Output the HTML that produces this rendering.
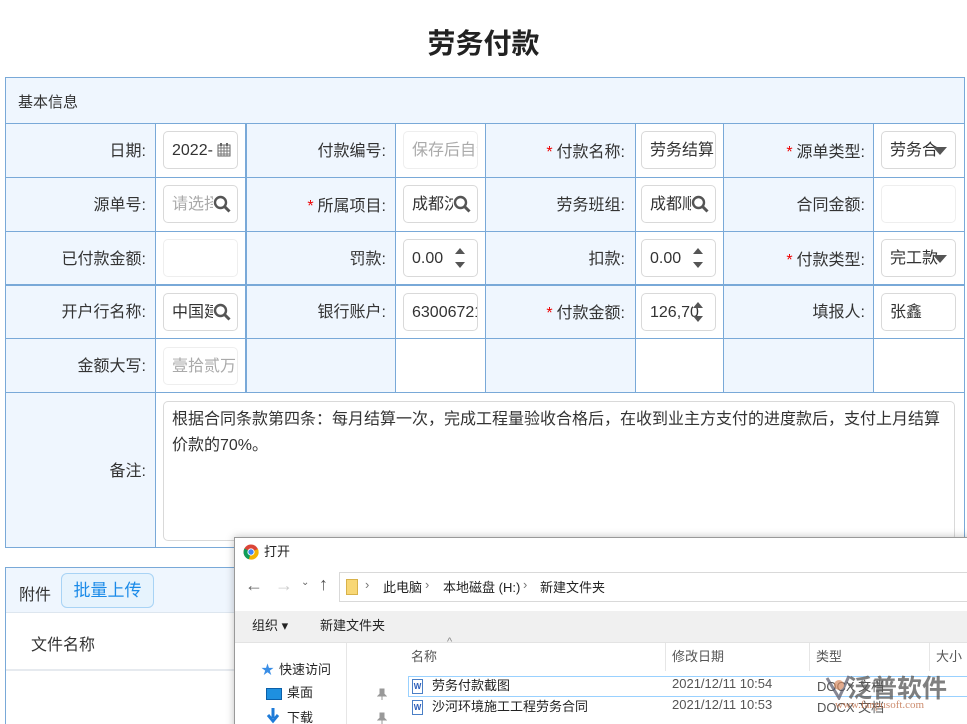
<!DOCTYPE html>
<html><head><meta charset="utf-8"><style>
*{box-sizing:border-box;margin:0;padding:0}
html,body{width:967px;height:724px;overflow:hidden}
body{background:#fff;font-family:"Liberation Sans","Noto Sans CJK SC",sans-serif;color:#333;position:relative}
.a{position:absolute}
.h{position:absolute;height:1px;background:#79a9d8}
.v{position:absolute;width:1px;background:#79a9d8}
.bl{position:absolute;background:#eff6fe}
.lb{position:absolute;font-size:16px;text-align:right;line-height:20px;white-space:nowrap}
.lb i{color:#e00;font-style:normal;margin-right:4px}
.in{position:absolute;height:38px;border:1px solid #d9d9d9;border-radius:5px;background:#fff;font-size:16px;line-height:38px;padding-left:8px;white-space:nowrap;overflow:hidden;color:#333}
.ph{color:#aaa}
.ic{position:absolute;right:6px;top:9px}
.tri{position:absolute;right:8px;top:15px;width:0;height:0;border-left:7px solid transparent;border-right:7px solid transparent;border-top:8px solid #555}
.sp{position:absolute;right:12px;top:8px;width:0;height:0;border-left:5px solid transparent;border-right:5px solid transparent;border-bottom:6px solid #555}
.sp2{position:absolute;right:12px;top:22px;width:0;height:0;border-left:5px solid transparent;border-right:5px solid transparent;border-top:6px solid #555}
.d{font-size:13px;color:#222;position:absolute;white-space:nowrap;margin-top:-3px}
</style></head><body>
<div class="a" style="left:0;top:22px;width:967px;text-align:center;font-size:28px;font-weight:bold;color:#222">劳务付款</div>

<div class="bl" style="left:5px;top:77px;width:960px;height:46px"></div>
<div class="bl" style="left:5px;top:123px;width:150px;height:425px"></div>
<div class="bl" style="left:245px;top:123px;width:150px;height:270px"></div>
<div class="bl" style="left:485px;top:123px;width:150px;height:270px"></div>
<div class="bl" style="left:723px;top:123px;width:150px;height:270px"></div>
<div class="a" style="left:18px;top:91px;font-size:15px">基本信息</div>

<div class="h" style="left:5px;top:77px;width:960px"></div>
<div class="h" style="left:5px;top:123px;width:960px"></div>
<div class="h" style="left:5px;top:177px;width:960px"></div>
<div class="h" style="left:5px;top:231px;width:960px"></div>
<div class="h" style="left:5px;top:284px;width:960px;height:2px"></div>
<div class="h" style="left:5px;top:338px;width:960px"></div>
<div class="h" style="left:5px;top:392px;width:960px"></div>
<div class="h" style="left:5px;top:547px;width:960px"></div>
<div class="v" style="left:5px;top:77px;height:471px"></div>
<div class="v" style="left:964px;top:77px;height:471px"></div>
<div class="v" style="left:155px;top:123px;height:425px"></div>
<div class="v" style="left:245px;top:123px;height:270px;width:2px"></div>
<div class="v" style="left:395px;top:123px;height:270px"></div>
<div class="v" style="left:485px;top:123px;height:270px"></div>
<div class="v" style="left:635px;top:123px;height:270px"></div>
<div class="v" style="left:723px;top:123px;height:270px"></div>
<div class="v" style="left:873px;top:123px;height:270px"></div>

<div class="lb" style="right:821px;top:142px">日期:</div>
<div class="in" style="left:163px;top:131px;width:75px">2022-<svg class="ic" style="top:11px;right:6px" width="14" height="14" viewBox="0 0 14 14"><rect x="1" y="2" width="12" height="11" fill="none" stroke="#666"/><path d="M1 5h12M1 8h12M1 11h12M4 2v11M7 2v11M10 2v11" stroke="#777"/><rect x="3" y="0" width="2" height="3" fill="#666"/><rect x="9" y="0" width="2" height="3" fill="#666"/></svg></div>
<div class="lb" style="right:581px;top:142px">付款编号:</div>
<div class="in ph" style="left:403px;top:131px;width:75px;border-color:#eee">保存后自动</div>
<div class="lb" style="right:342px;top:143px"><i>*</i>付款名称:</div>
<div class="in" style="left:641px;top:131px;width:75px">劳务结算</div>
<div class="lb" style="right:102px;top:143px"><i>*</i>源单类型:</div>
<div class="in" style="left:881px;top:131px;width:75px">劳务合<span class="tri"></span></div>

<div class="lb" style="right:821px;top:196px">源单号:</div>
<div class="in ph" style="left:163px;top:185px;width:75px">请选择<svg class="ic" width="18" height="18" viewBox="0 0 18 18" style="background:#fff"><circle cx="7.5" cy="7.5" r="5.5" fill="none" stroke="#555" stroke-width="2.4"/><path d="M11.5 11.5l5 5" stroke="#555" stroke-width="3"/></svg></div>
<div class="lb" style="right:581px;top:197px"><i>*</i>所属项目:</div>
<div class="in" style="left:403px;top:185px;width:75px">成都沈<svg class="ic" width="18" height="18" viewBox="0 0 18 18" style="background:#fff"><circle cx="7.5" cy="7.5" r="5.5" fill="none" stroke="#555" stroke-width="2.4"/><path d="M11.5 11.5l5 5" stroke="#555" stroke-width="3"/></svg></div>
<div class="lb" style="right:342px;top:196px">劳务班组:</div>
<div class="in" style="left:641px;top:185px;width:75px">成都顺<svg class="ic" width="18" height="18" viewBox="0 0 18 18" style="background:#fff"><circle cx="7.5" cy="7.5" r="5.5" fill="none" stroke="#555" stroke-width="2.4"/><path d="M11.5 11.5l5 5" stroke="#555" stroke-width="3"/></svg></div>
<div class="lb" style="right:102px;top:196px">合同金额:</div>
<div class="in" style="left:881px;top:185px;width:75px;border-color:#eee"></div>

<div class="lb" style="right:821px;top:250px">已付款金额:</div>
<div class="in" style="left:163px;top:239px;width:75px;border-color:#eee"></div>
<div class="lb" style="right:581px;top:250px">罚款:</div>
<div class="in" style="left:403px;top:239px;width:75px">0.00<span class="sp"></span><span class="sp2"></span></div>
<div class="lb" style="right:342px;top:250px">扣款:</div>
<div class="in" style="left:641px;top:239px;width:75px">0.00<span class="sp"></span><span class="sp2"></span></div>
<div class="lb" style="right:102px;top:251px"><i>*</i>付款类型:</div>
<div class="in" style="left:881px;top:239px;width:75px">完工款<span class="tri"></span></div>

<div class="lb" style="right:821px;top:303px">开户行名称:</div>
<div class="in" style="left:163px;top:293px;width:75px">中国建<svg class="ic" width="18" height="18" viewBox="0 0 18 18" style="background:#fff"><circle cx="7.5" cy="7.5" r="5.5" fill="none" stroke="#555" stroke-width="2.4"/><path d="M11.5 11.5l5 5" stroke="#555" stroke-width="3"/></svg></div>
<div class="lb" style="right:581px;top:303px">银行账户:</div>
<div class="in" style="left:403px;top:293px;width:75px">63006721</div>
<div class="lb" style="right:342px;top:304px"><i>*</i>付款金额:</div>
<div class="in" style="left:641px;top:293px;width:75px;padding-right:20px">126,70<span class="sp" style="background:#fff"></span><span class="sp2"></span></div>
<div class="lb" style="right:102px;top:303px">填报人:</div>
<div class="in" style="left:881px;top:293px;width:75px">张鑫</div>

<div class="lb" style="right:821px;top:357px">金额大写:</div>
<div class="in ph" style="left:163px;top:347px;width:75px;border-color:#eee">壹拾贰万</div>

<div class="lb" style="right:821px;top:462px">备注:</div>
<div class="a" style="left:163px;top:401px;width:792px;height:140px;border:1px solid #d9d9d9;border-radius:5px;padding:5px 8px;font-size:16px;line-height:26px">根据合同条款第四条：每月结算一次，完成工程量验收合格后，在收到业主方支付的进度款后，支付上月结算价款的70%。</div>

<div class="a" style="left:5px;top:567px;width:960px;height:160px;border:1px solid #79a9d8"></div>
<div class="bl" style="left:6px;top:568px;width:958px;height:45px;border-bottom:1px solid #dde6ef"></div>
<div class="a" style="left:19px;top:581px;font-size:16px">附件</div>
<div class="a" style="left:61px;top:573px;width:93px;height:35px;border:1px solid #a8d3f5;border-radius:6px;background:#e6f3fd;color:#1a8ae8;font-size:17px;text-align:center;line-height:33px">批量上传</div>
<div class="a" style="left:31px;top:631px;font-size:16px">文件名称</div>
<div class="a" style="left:6px;top:669px;width:958px;height:2px;background:#e6eaef"></div>

<div class="a" style="left:234px;top:537px;width:740px;height:200px;background:#fff;border:1px solid #999;box-shadow:0 0 8px rgba(0,0,0,.25)">
  <svg class="a" style="left:8px;top:6px" width="16" height="16" viewBox="0 0 16 16"><circle cx="8" cy="8" r="7.5" fill="#db4437"/><path d="M8 8L1.5 4.5A7.5 7.5 0 0 0 6 15.3z" fill="#0f9d58"/><path d="M8 8l6.9-3A7.5 7.5 0 0 1 6 15.3z" fill="#f4b400"/><circle cx="8" cy="8" r="3.6" fill="#fff"/><circle cx="8" cy="8" r="2.7" fill="#4285f4"/></svg>
  <div class="d" style="left:29px;top:6px">打开</div>
  <div class="d" style="left:10px;top:40px;font-size:18px;color:#666">←</div>
  <div class="d" style="left:40px;top:40px;font-size:18px;color:#ccc">→</div>
  <div class="d" style="left:66px;top:42px;font-size:10px;color:#666">⌄</div>
  <div class="d" style="left:84px;top:39px;font-size:18px;color:#555">↑</div>
  <div class="a" style="left:104px;top:34px;width:640px;height:30px;border:1px solid #d9d9d9"></div>
  <div class="a" style="left:111px;top:41px;width:12px;height:16px;background:#f8d775;border:1px solid #d8b24a"></div>
  <div class="d" style="left:130px;top:42px;color:#777">›</div>
  <div class="d" style="left:148px;top:42px">此电脑</div>
  <div class="d" style="left:190px;top:42px;color:#777">›</div>
  <div class="d" style="left:208px;top:42px">本地磁盘 (H:)</div>
  <div class="d" style="left:288px;top:42px;color:#777">›</div>
  <div class="d" style="left:305px;top:42px">新建文件夹</div>
  <div class="a" style="left:0;top:73px;width:740px;height:32px;background:#f0f0f0;border-bottom:1px solid #e3e3e3"></div>
  <div class="d" style="left:17px;top:80px">组织 ▾</div>
  <div class="d" style="left:85px;top:80px">新建文件夹</div>
  <div class="a" style="left:111px;top:105px;width:1px;height:100px;background:#e6e6e6"></div>
  <div class="d" style="left:26px;top:124px;color:#3a8ee6">★</div>
  <div class="d" style="left:44px;top:124px">快速访问</div>
  <div class="a" style="left:31px;top:150px;width:16px;height:12px;background:#1e90e0;border:1px solid #0b5fa8"></div>
  <div class="d" style="left:52px;top:147px">桌面</div>
  <svg class="a" style="left:142px;top:150px" width="10" height="12" viewBox="0 0 10 12"><path d="M3 1h4v5l2 2H1l2-2z M5 8v4" fill="#999" stroke="#999"/></svg>
  <svg class="a" style="left:30px;top:170px" width="16" height="16" viewBox="0 0 16 16"><path d="M8 0v10M3 7l5 6 5-6" fill="none" stroke="#1e7bd8" stroke-width="3"/></svg>
  <div class="d" style="left:52px;top:172px">下载</div>
  <svg class="a" style="left:142px;top:174px" width="10" height="12" viewBox="0 0 10 12"><path d="M3 1h4v5l2 2H1l2-2z M5 8v4" fill="#999" stroke="#999"/></svg>
  <div class="d" style="left:212px;top:101px;color:#888;font-size:11px">^</div>
  <div class="d" style="left:176px;top:111px;color:#555">名称</div>
  <div class="a" style="left:430px;top:105px;width:1px;height:28px;background:#e6e6e6"></div>
  <div class="d" style="left:437px;top:111px;color:#555">修改日期</div>
  <div class="a" style="left:574px;top:105px;width:1px;height:28px;background:#e6e6e6"></div>
  <div class="d" style="left:581px;top:111px;color:#555">类型</div>
  <div class="a" style="left:694px;top:105px;width:1px;height:28px;background:#e6e6e6"></div>
  <div class="d" style="left:701px;top:111px;color:#555">大小</div>
  <div class="a" style="left:173px;top:138px;width:570px;height:21px;border:1px solid #99d1ff"></div>
  <div class="a" style="left:177px;top:141px;width:11px;height:15px;background:#fff;border:1px solid #4a7fc6;font-size:8px;color:#2b5cb8;text-align:center;line-height:13px;font-weight:bold">W</div>
  <div class="d" style="left:197px;top:140px">劳务付款截图</div>
  <div class="d" style="left:437px;top:141px;color:#555">2021/12/11 10:54</div>
  <div class="d" style="left:582px;top:141px;color:#555">DOCX 文档</div>
  <div class="a" style="left:177px;top:162px;width:11px;height:15px;background:#fff;border:1px solid #4a7fc6;font-size:8px;color:#2b5cb8;text-align:center;line-height:13px;font-weight:bold">W</div>
  <div class="d" style="left:197px;top:161px">沙河环境施工工程劳务合同</div>
  <div class="d" style="left:437px;top:162px;color:#555">2021/12/11 10:53</div>
  <div class="d" style="left:582px;top:162px;color:#555">DOCX 文档</div>
  <svg class="a" style="left:590px;top:136px;opacity:.7" width="26" height="26" viewBox="0 0 26 26"><path d="M2 4 L14 24 L24 2" fill="none" stroke="#556" stroke-width="3"/><circle cx="14" cy="11" r="5" fill="#d88a60"/></svg>
  <div class="d" style="left:612px;top:134px;font-size:25px;font-weight:bold;color:#555;opacity:.75">泛普软件</div>
  <div class="d" style="left:600px;top:164px;font-size:11px;color:#c0704a;font-family:'Liberation Serif',serif;opacity:.8">www.fanpusoft.com</div>
</div>
</body></html>
